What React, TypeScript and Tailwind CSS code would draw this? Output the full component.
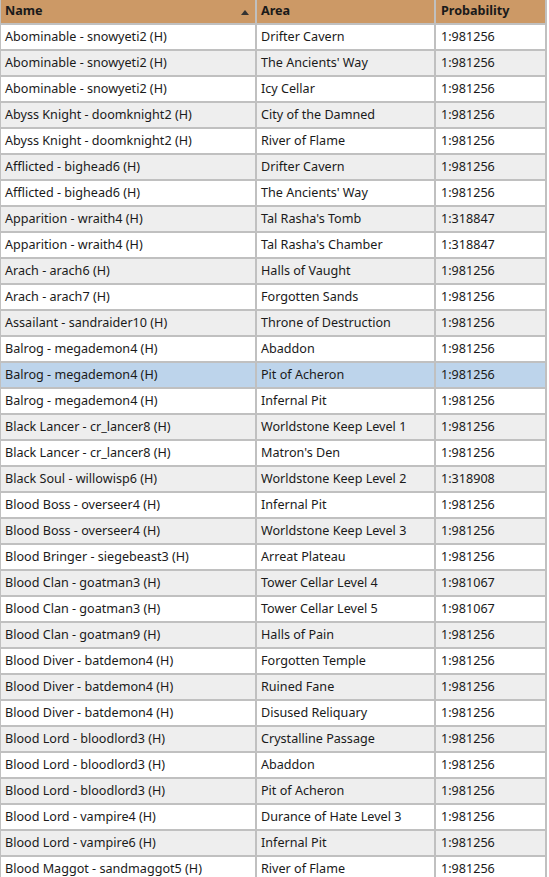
const rows: [string, string, string][] = [
  ['Abominable - snowyeti2 (H)', 'Drifter Cavern', '1:981256'],
  ['Abominable - snowyeti2 (H)', "The Ancients' Way", '1:981256'],
  ['Abominable - snowyeti2 (H)', 'Icy Cellar', '1:981256'],
  ['Abyss Knight - doomknight2 (H)', 'City of the Damned', '1:981256'],
  ['Abyss Knight - doomknight2 (H)', 'River of Flame', '1:981256'],
  ['Afflicted - bighead6 (H)', 'Drifter Cavern', '1:981256'],
  ['Afflicted - bighead6 (H)', "The Ancients' Way", '1:981256'],
  ['Apparition - wraith4 (H)', "Tal Rasha's Tomb", '1:318847'],
  ['Apparition - wraith4 (H)', "Tal Rasha's Chamber", '1:318847'],
  ['Arach - arach6 (H)', 'Halls of Vaught', '1:981256'],
  ['Arach - arach7 (H)', 'Forgotten Sands', '1:981256'],
  ['Assailant - sandraider10 (H)', 'Throne of Destruction', '1:981256'],
  ['Balrog - megademon4 (H)', 'Abaddon', '1:981256'],
  ['Balrog - megademon4 (H)', 'Pit of Acheron', '1:981256'],
  ['Balrog - megademon4 (H)', 'Infernal Pit', '1:981256'],
  ['Black Lancer - cr_lancer8 (H)', 'Worldstone Keep Level 1', '1:981256'],
  ['Black Lancer - cr_lancer8 (H)', "Matron's Den", '1:981256'],
  ['Black Soul - willowisp6 (H)', 'Worldstone Keep Level 2', '1:318908'],
  ['Blood Boss - overseer4 (H)', 'Infernal Pit', '1:981256'],
  ['Blood Boss - overseer4 (H)', 'Worldstone Keep Level 3', '1:981256'],
  ['Blood Bringer - siegebeast3 (H)', 'Arreat Plateau', '1:981256'],
  ['Blood Clan - goatman3 (H)', 'Tower Cellar Level 4', '1:981067'],
  ['Blood Clan - goatman3 (H)', 'Tower Cellar Level 5', '1:981067'],
  ['Blood Clan - goatman9 (H)', 'Halls of Pain', '1:981256'],
  ['Blood Diver - batdemon4 (H)', 'Forgotten Temple', '1:981256'],
  ['Blood Diver - batdemon4 (H)', 'Ruined Fane', '1:981256'],
  ['Blood Diver - batdemon4 (H)', 'Disused Reliquary', '1:981256'],
  ['Blood Lord - bloodlord3 (H)', 'Crystalline Passage', '1:981256'],
  ['Blood Lord - bloodlord3 (H)', 'Abaddon', '1:981256'],
  ['Blood Lord - bloodlord3 (H)', 'Pit of Acheron', '1:981256'],
  ['Blood Lord - vampire4 (H)', 'Durance of Hate Level 3', '1:981256'],
  ['Blood Lord - vampire6 (H)', 'Infernal Pit', '1:981256'],
  ['Blood Maggot - sandmaggot5 (H)', 'River of Flame', '1:981256'],
];

// row currently selected (Balrog / Pit of Acheron)
const SELECTED = 13;

export default function App() {
  return (
    <div className="w-[549px] h-[877px] overflow-hidden bg-white font-['Noto_Sans',sans-serif] text-[12.6px] text-[#1a1a1a]">
      <div className="w-[547px] bg-[#c0c0c0] pl-[1px] pr-[2px] pb-[2px] grid grid-cols-[254px_177px_109px] gap-[2px]">
        {/* header */}
        <div className="h-[23px] bg-[#cc9966] flex items-center justify-between pl-[4px] pr-[6px] font-bold">
          <span>Name</span>
          <svg width="8" height="5" viewBox="0 0 8 5" className="mt-[1px]">
            <polygon points="0,5 4,0 8,5" fill="#333" />
          </svg>
        </div>
        <div className="h-[23px] bg-[#cc9966] flex items-center pl-[4px] font-bold">Area</div>
        <div className="h-[23px] bg-[#cc9966] flex items-center pl-[5px] font-bold">Probability</div>

        {rows.map((r, i) => {
          const bg = i === SELECTED ? 'bg-[#bdd4eb]' : i % 2 === 0 ? 'bg-white' : 'bg-[#eeeeee]';
          return [
            <div key={`n${i}`} className={`h-[24px] flex items-center pl-[4px] whitespace-nowrap ${bg}`}>{r[0]}</div>,
            <div key={`a${i}`} className={`h-[24px] flex items-center pl-[4px] whitespace-nowrap ${bg}`}>{r[1]}</div>,
            <div key={`p${i}`} className={`h-[24px] flex items-center pl-[5px] whitespace-nowrap ${bg}`}>{r[2]}</div>,
          ];
        })}
      </div>
    </div>
  );
}
